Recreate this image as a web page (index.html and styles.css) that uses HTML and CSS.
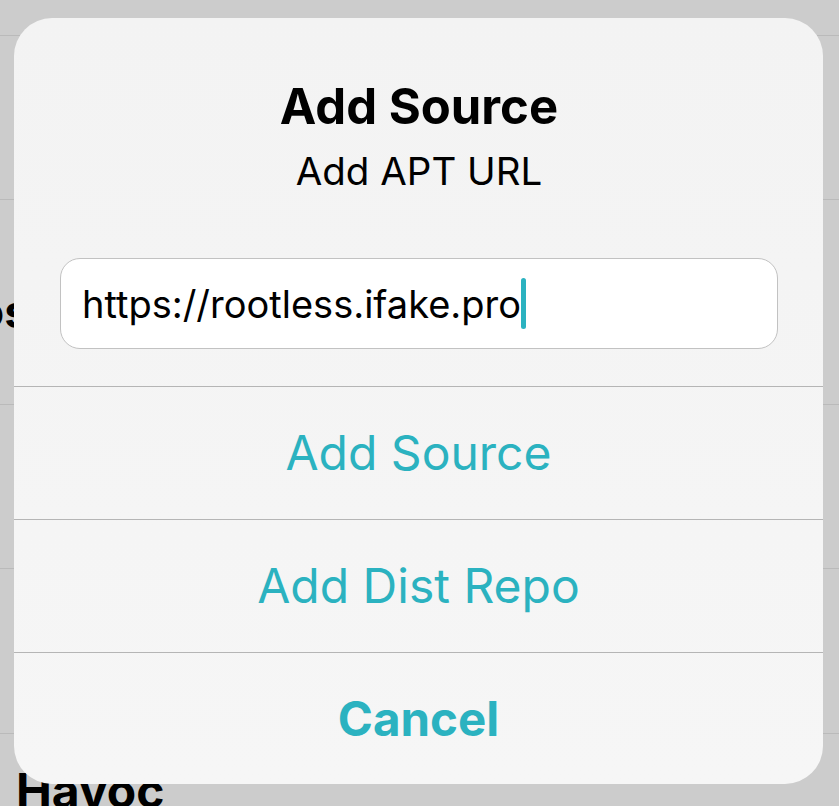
FILE: index.html
```html
<!DOCTYPE html>
<html lang="en">
<head>
<meta charset="utf-8">
<title>Add Source</title>
<link rel="stylesheet" href="styles.css">
</head>
<body>
<div class="screen">
  <div class="bg">
    <div class="row r1"></div>
    <div class="row r2"></div>
    <div class="row r3"><div class="peek"><span>Repos</span></div></div>
    <div class="row r4"></div>
    <div class="row r5"></div>
    <div class="section">Havoc</div>
  </div>

  <div class="alert">
    <div class="alert-head">
      <div class="alert-title">Add Source</div>
      <div class="alert-msg">Add APT URL</div>
      <div class="field">
        <span class="field-text">https://rootless.ifake.pro</span><span class="caret"></span>
      </div>
    </div>
    <div class="alert-btn">Add Source</div>
    <div class="alert-btn">Add Dist Repo</div>
    <div class="alert-btn cancel">Cancel</div>
  </div>
</div>
</body>
</html>
```

FILE: styles.css
```css
html, body {
  margin: 0;
  padding: 0;
}
body {
  background: #cccccc;
  font-family: "Inter", "Liberation Sans", sans-serif;
  color: #000;
}
.screen {
  position: relative;
  width: 839px;
  height: 806px;
  overflow: hidden;
  background: #cccccc;
}
.bg {
  display: flex;
  flex-direction: column;
}
.row {
  border-bottom: 1px solid #bababa;
  display: flex;
}
.r1 { height: 35px; }
.r2 { height: 163px; }
.r3 { height: 204px; }
.r4 { height: 163px; }
.r5 { height: 164px; }
.peek {
  width: 30px;
  display: flex;
  justify-content: flex-end;
  padding-top: 83px;
  white-space: nowrap;
  font-weight: 700;
  font-size: 46px;
  line-height: 56px;
}
.section {
  padding: 28px 0 0 16px;
  font-weight: 700;
  font-size: 48px;
  line-height: 58px;
  white-space: nowrap;
}

.alert {
  position: absolute;
  left: 14px;
  top: 18px;
  width: 809px;
  height: 766px;
  border-radius: 38px;
  background: linear-gradient(180deg, #f3f3f3 0%, #f6f6f6 100%);
  overflow: hidden;
  display: flex;
  flex-direction: column;
}
.alert-head {
  height: 368px;
  box-sizing: border-box;
  padding: 60px 45px 0 46px;
  display: flex;
  flex-direction: column;
  align-items: stretch;
}
.alert-title {
  text-align: center;
  font-weight: 700;
  font-size: 49px;
  line-height: 58px;
}
.alert-msg {
  margin-top: 13px;
  text-align: center;
  font-size: 38.5px;
  line-height: 44px;
}
.field {
  margin-top: 65px;
  height: 91px;
  box-sizing: border-box;
  border: 1px solid #c2c2c2;
  border-radius: 20px;
  background: #ffffff;
  padding-left: 21px;
  display: flex;
  align-items: center;
}
.field-text {
  font-size: 38px;
  line-height: 48px;
  white-space: nowrap;
}
.caret {
  width: 5px;
  height: 51px;
  border-radius: 3px;
  background: #2bb2c0;
  margin-left: 0;
}
.alert-btn {
  height: 133px;
  box-sizing: border-box;
  border-top: 1px solid #b5b5b5;
  display: flex;
  align-items: center;
  justify-content: center;
  color: #2bb2c0;
  font-size: 48px;
  line-height: 60px;
}
.alert-btn.cancel {
  height: 132px;
  font-weight: 700;
  font-size: 47.5px;
}
```
